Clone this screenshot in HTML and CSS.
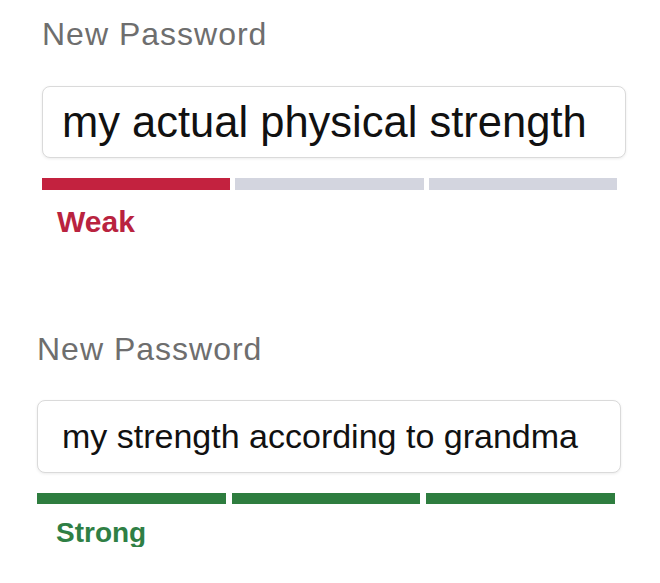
FILE: index.html
```html
<!DOCTYPE html>
<html lang="en">
<head>
  <meta charset="UTF-8">
  <meta name="viewport" content="width=device-width, initial-scale=1.0">
  <title>New Password</title>
  <link rel="stylesheet" href="styles.css">
</head>
<body>
  <main class="page">
    <!-- Weak password -->
    <section class="field field-weak">
      <label class="field-label" for="pw-weak">New Password</label>
      <input class="field-input" id="pw-weak" type="text" value="my actual physical strength" readonly>
      <div class="meter">
        <span class="meter-seg on"></span>
        <span class="meter-seg"></span>
        <span class="meter-seg"></span>
      </div>
      <p class="meter-text">Weak</p>
    </section>

    <!-- Strong password -->
    <section class="field field-strong">
      <label class="field-label" for="pw-strong">New Password</label>
      <input class="field-input" id="pw-strong" type="text" value="my strength according to grandma" readonly>
      <div class="meter">
        <span class="meter-seg on"></span>
        <span class="meter-seg on"></span>
        <span class="meter-seg on"></span>
      </div>
      <p class="meter-text">Strong</p>
    </section>
  </main>
</body>
</html>
```

FILE: styles.css
```css
/* General */
body {
  margin: 0;
  background: #fff;
  font-family: "Liberation Sans", Arial, sans-serif;
  color: #111;
}
.page {
  padding-top: 14px;
}

/* Field block */
.field {
  width: 584px;
}
.field-label {
  display: block;
  font-size: 32px;
  line-height: 40px;
  letter-spacing: 1px;
  color: #6e6e6e;
}
.field-input {
  display: block;
  box-sizing: border-box;
  width: 100%;
  border: 1px solid #dadada;
  border-radius: 8px;
  box-shadow: 0 1px 3px rgba(0,0,0,0.08);
  background: #fff;
  font-family: "Liberation Sans", Arial, sans-serif;
  color: #111;
  outline: none;
}

/* Strength meter */
.meter {
  display: flex;
}
.meter-seg {
  flex: 1;
  background: #d3d5df;
}
.meter-text {
  margin: 0;
  font-weight: bold;
}

/* Weak variant */
.field-weak {
  margin-left: 42px;
}
.field-weak .field-label {
  margin-bottom: 32px;
}
.field-weak .field-input {
  height: 72px;
  padding: 0 19px;
  font-size: 43.5px;
  margin-bottom: 20px;
}
.field-weak .meter {
  width: 575px;
  height: 12px;
  gap: 5px;
  margin-bottom: 17px;
}
.field-weak .meter-seg.on {
  background: #c3223f;
}
.field-weak .meter-text {
  padding-left: 15px;
  font-size: 30px;
  line-height: 30px;
  color: #b9233f;
}

/* Strong variant */
.field-strong {
  margin-left: 37px;
  margin-top: 92px;
}
.field-strong .field-label {
  margin-bottom: 31px;
}
.field-strong .field-input {
  height: 73px;
  padding: 0 24px;
  font-size: 34px;
  margin-bottom: 20px;
}
.field-strong .meter {
  width: 578px;
  height: 11px;
  gap: 6px;
  margin-bottom: 15px;
}
.field-strong .meter-seg.on {
  background: #2e7d3f;
}
.field-strong .meter-text {
  padding-left: 19px;
  font-size: 28px;
  line-height: 28px;
  color: #2f7f45;
}
```
